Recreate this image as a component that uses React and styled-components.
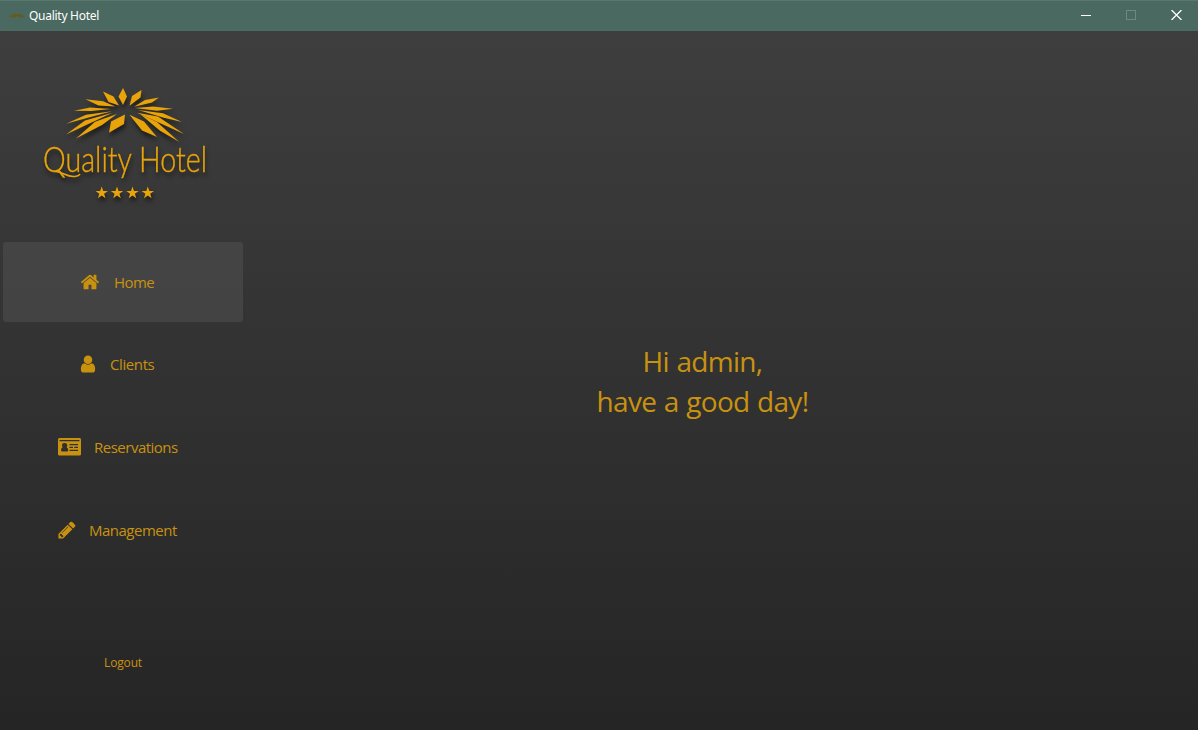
import React from "react";
import styled, { createGlobalStyle } from "styled-components";

const gold = "#c8920f";
const brightGold = "#e9a409";

const GlobalStyle = createGlobalStyle`
  * { box-sizing: border-box; }
  body { margin: 0; overflow: hidden; }
`;

const Window = styled.div`
  width: 1198px;
  height: 730px;
  display: flex;
  flex-direction: column;
  font-family: "Open Sans", "Noto Sans", sans-serif;
  color: ${gold};
`;

const TitleBar = styled.header`
  height: 31px;
  flex: none;
  display: flex;
  align-items: center;
  background: #4a6960;
  border-top: 1px solid #5a776e;
`;

const AppIcon = styled.svg`
  width: 16px;
  height: 16px;
  margin: 0 4px 0 9px;
`;

const Title = styled.span`
  flex: 1;
  padding-bottom: 1px;
  color: #fff;
  font-family: "Noto Sans", sans-serif;
  font-size: 12px;
  letter-spacing: -0.27px;
`;

const Controls = styled.div`
  display: flex;
  height: 100%;
  padding-bottom: 2px;
`;

const ControlButton = styled.button`
  width: ${(p) => p.$width || 45}px;
  display: flex;
  align-items: center;
  justify-content: center;
  padding: 0;
  border: 0;
  background: none;
  color: ${(p) => (p.$dim ? "#6d897f" : "#fff")};
`;

const Body = styled.div`
  flex: 1;
  display: flex;
  background: linear-gradient(#3e3e3e, #252525);
`;

const Sidebar = styled.aside`
  width: 246px;
  flex: none;
  display: flex;
  flex-direction: column;
`;

const Logo = styled.svg`
  width: 246px;
  height: 211px;
  flex: none;
  display: block;
  filter: drop-shadow(1px 4px 2px rgba(0, 0, 0, 0.5));
`;

const Nav = styled.nav`
  display: flex;
  flex-direction: column;
  gap: 2.7px;
  margin-top: -0.3px;
  padding: 0 3px;
`;

const NavItem = styled.a`
  height: 80px;
  display: flex;
  align-items: center;
  padding-left: ${(p) => p.$indent}px;
  gap: ${(p) => p.$gap}px;
  border-radius: 3px;
  background: ${(p) => (p.$active ? "rgba(255, 255, 255, 0.075)" : "transparent")};
`;

const NavIcon = styled.svg`
  width: ${(p) => p.$width || 20}px;
  height: 20px;
  flex: none;
  fill: currentColor;
`;

const NavLabel = styled.span`
  font-size: 15px;
  line-height: 20px;
  letter-spacing: ${(p) => p.$spacing || 0}px;
`;

const Logout = styled.a`
  margin-top: 84px;
  text-align: center;
  font-size: 12px;
  line-height: 17px;
  letter-spacing: -0.15px;
`;

const Main = styled.main`
  flex: 1;
  display: flex;
  align-items: center;
  justify-content: center;
  margin-right: 39px;
`;

const Greeting = styled.h1`
  margin: 0;
  text-align: center;
  font-size: 28px;
  line-height: 40px;
  font-weight: 400;
  letter-spacing: -0.7px;
  word-spacing: 1px;
`;

const rays = [
  "123,88 127,96.5 123,105 118.5,96.5",
  "103,91.5 113.5,96.5 119,105.5 108.5,102",
  "85.5,99.3 103,101.3 115.5,106.5 98.5,105.5",
  "74,110.7 90,107.5 111,109 91,111",
  "66,123.7 86,114.7 112,111.3 86,118.2",
  "66,134.5 85,120.5 112.5,112.7 90,123.2",
  "76,138.5 95,121.7 117,114 102,125",
  "109,132.7 111,121.5 125,114.5 124,124",
  "141.5,90 140.5,97.5 129.5,105.7 132,96",
  "159,97.5 152,102.5 134,106.8 145,100",
  "173,108.7 157,110.7 135,108 153,106.5",
  "182,122 163,117.5 138,110 163,113.3",
  "184,134 163,124.4 137,112.7 158,116.5",
  "179,141.7 160,130.7 140,114 157,122",
  "157,137 142,130.5 129.5,114.7 144,121.5",
];

const star = "0,-6.5 1.5,-2 6.2,-2 2.4,0.8 3.8,5.3 0,2.5 -3.8,5.3 -2.4,0.8 -6.2,-2 -1.5,-2";

function HotelLogo() {
  return (
    <Logo viewBox="0 31 246 211" fill={brightGold}>
      {rays.map((points) => (
        <polygon key={points} points={points} />
      ))}
      <text
        transform="translate(43 172) scale(0.82 1)"
        textLength="200"
        lengthAdjust="spacingAndGlyphs"
        fontFamily="Lato, sans-serif"
        fontWeight="300"
        fontSize="36"
        stroke={brightGold}
        strokeWidth="0.4"
      >
        Quality Hotel
      </text>
      <path d="M56 171.5 C63 172 67 177.5 75 176.5 Q79 176 80 174" fill="none" stroke={brightGold} strokeWidth="1.5" />
      {[101.7, 117, 132.5, 147.8].map((x) => (
        <polygon key={x} points={star} transform={`translate(${x} 193)`} />
      ))}
    </Logo>
  );
}

export default function App() {
  return (
    <Window>
      <GlobalStyle />
      <TitleBar>
        <AppIcon viewBox="0 0 16 16" fill="#665b1e">
          <path d="M0 9.5 2 7 5 5.7 8 6.2 11 5.7 14 7 15.5 9.5 12 8.7 10.5 10 8.5 8.3 7.5 8.3 5.5 10 4 8.7Z" />
        </AppIcon>
        <Title>Quality Hotel</Title>
        <Controls>
          <ControlButton>
            <svg width="10" height="10"><path d="M0 5.5H10" stroke="currentColor" /></svg>
          </ControlButton>
          <ControlButton $dim $width={46}>
            <svg width="10" height="10"><rect x=".5" y=".5" width="9" height="9" fill="none" stroke="currentColor" /></svg>
          </ControlButton>
          <ControlButton $width={44}>
            <svg width="12" height="10"><path d="M1.5 0 11.5 10M11.5 0 1.5 10" stroke="currentColor" strokeWidth="1.3" /></svg>
          </ControlButton>
        </Controls>
      </TitleBar>
      <Body>
        <Sidebar>
          <HotelLogo />
          <Nav>
            <NavItem $active $indent={77} $gap={14}>
              <NavIcon viewBox="0 0 1792 1792">
                <path d="M1472 992v480q0 26-19 45t-45 19h-384v-384h-256v384h-384q-26 0-45-19t-19-45v-480q0-1 .5-3t.5-3l575-474 575 474q1 2 1 6zm223-69l-62 74q-8 9-21 11h-3q-13 0-21-7l-692-577-692 577q-12 8-24 7-13-2-21-11l-62-74q-8-10-7-23.5t11-21.5l719-599q32-26 76-26t76 26l244 204v-195q0-14 9-23t23-9h192q14 0 23 9t9 23v408l219 182q10 8 11 21.5t-7 23.5z" />
              </NavIcon>
              <NavLabel $spacing={-0.6}>Home</NavLabel>
            </NavItem>
            <NavItem $indent={75} $gap={12}>
              <NavIcon viewBox="0 0 1792 1792">
                <path d="M1536 1399q0 109-62.5 187t-150.5 78h-854q-88 0-150.5-78t-62.5-187q0-85 8.5-160.5t31.5-152 58.5-131 94-89 134.5-34.5q131 128 313 128t313-128q76 0 134.5 34.5t94 89 58.5 131 31.5 152 8.5 160.5zm-256-887q0 159-112.5 271.5t-271.5 112.5-271.5-112.5-112.5-271.5 112.5-271.5 271.5-112.5 271.5 112.5 112.5 271.5z" />
              </NavIcon>
              <NavLabel $spacing={-0.4}>Clients</NavLabel>
            </NavItem>
            <NavItem $indent={55} $gap={13}>
              <NavIcon $width={23} viewBox="0 0 23 20">
                <path fillRule="evenodd" d="M1.5 1H21.5Q23 1 23 2.5V17Q23 18.5 21.5 18.5H1.5Q0 18.5 0 17V2.5Q0 1 1.5 1ZM1.5 3V4.2H21.5V3ZM3 13.2Q3 14.5 4.2 14.5H9Q10.2 14.5 10.2 13.2 10.2 10.5 8.6 10.2 9.3 9.3 9.3 8.3 9.2 6 6.6 6 4 6 4 8.3 4 9.3 4.7 10.2 3 10.5 3 13.2ZM11.5 7V8.2H20V7ZM11.5 9.8V11H15V9.8ZM16.3 9.8V11H20V9.8ZM11.5 12.7V13.9H20V12.7Z" />
              </NavIcon>
              <NavLabel $spacing={-0.5}>Reservations</NavLabel>
            </NavItem>
            <NavItem $indent={54} $gap={12}>
              <NavIcon viewBox="0 0 1792 1792">
                <path d="M491 1536l91-91-235-235-91 91v107h128v128h107zm523-928q0-22-22-22-10 0-17 7l-542 542q-7 7-7 17 0 22 22 22 10 0 17-7l542-542q7-7 7-17zm-54-192l416 416-832 832h-416v-416zm683 96q0 53-37 90l-166 166-416-416 166-165q36-38 90-38 53 0 91 38l235 234q37 39 37 91z" />
              </NavIcon>
              <NavLabel $spacing={-0.5}>Management</NavLabel>
            </NavItem>
          </Nav>
          <Logout>Logout</Logout>
        </Sidebar>
        <Main>
          <Greeting>
            Hi admin,
            <br />
            have a good day!
          </Greeting>
        </Main>
      </Body>
    </Window>
  );
}
